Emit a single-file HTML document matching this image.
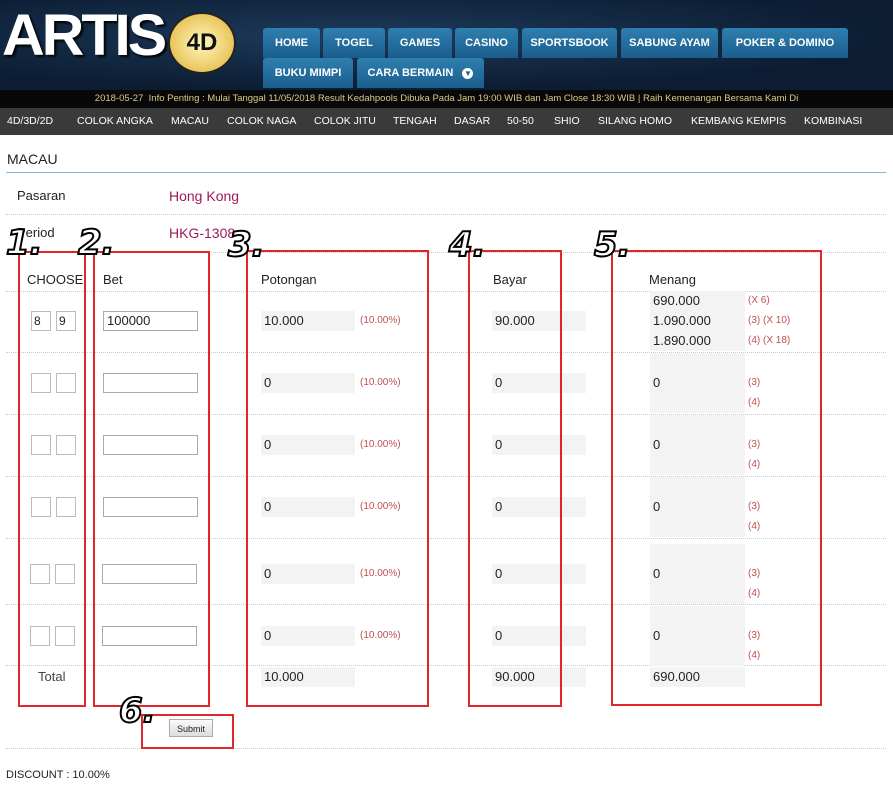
<!DOCTYPE html><html><head><meta charset="utf-8"><style>
body{margin:0;width:893px;height:797px;position:relative;background:#fff;font-family:"Liberation Sans",sans-serif;overflow:hidden;color:#222}
.a{position:absolute}
#hd{left:0;top:0;width:893px;height:90px;background:radial-gradient(ellipse at 40% 40%,#1d3a5a,#0c1d33 70%)}
.nb{position:absolute;height:30px;background:linear-gradient(#2e7fb0,#1a5d8c);color:#fff;font-size:11px;font-weight:bold;line-height:30px;text-align:center;border-radius:3px 3px 0 0}
#tk{left:0;top:90px;width:893px;height:18px;background:#080808;color:#d6c98a;font-size:9.5px;line-height:18px;text-align:center}
#sm{left:0;top:108px;width:893px;height:27px;background:#3a3a3a;color:#fff;font-size:10.5px;line-height:27px}
#sm span{position:absolute;top:0}
.dl{position:absolute;left:6px;width:880px;border-top:1px dotted #ccc}
.t{position:absolute;font-size:13px;line-height:20px}
.ib{position:absolute;border:1px solid #bbb;font-size:12px;line-height:18px;padding-left:2px;box-sizing:border-box;width:20px;height:20px}
.bi{position:absolute;width:95px;height:20px;border:1px solid #aaa;box-sizing:border-box;font-size:13px;line-height:18px;padding-left:3px}
.g{position:absolute;background:#f3f3f3;height:20px;font-size:13px;line-height:20px;padding-left:3px;box-sizing:border-box}
.p{position:absolute;font-size:10px;color:#c05050;line-height:20px}
.rb{position:absolute;border:2px solid #e0262b;box-sizing:border-box}
.n{position:absolute;font-size:34px;font-weight:bold;font-style:italic;color:#fff;-webkit-text-stroke:2px #000;font-family:"DejaVu Sans",sans-serif;line-height:34px}
</style></head><body>
<div id="hd" class="a"></div>
<div class="a" style="left:2px;top:2px;font-size:58px;font-weight:900;color:#fff;font-family:'Liberation Sans';letter-spacing:-3px;transform:scaleX(1.02);transform-origin:left;text-shadow:2px 2px 2px #000">ARTIS</div>
<div class="a" style="left:168px;top:12px;width:64px;height:58px;border-radius:50%;background:radial-gradient(#fff7c0,#e0b030);border:2px solid #222;font-size:24px;font-weight:bold;color:#111;text-align:center;line-height:58px">4D</div>
<div class="nb" style="left:263px;top:28px;width:57px">HOME</div>
<div class="nb" style="left:323px;top:28px;width:62px">TOGEL</div>
<div class="nb" style="left:388px;top:28px;width:64px">GAMES</div>
<div class="nb" style="left:455px;top:28px;width:63px">CASINO</div>
<div class="nb" style="left:522px;top:28px;width:95px">SPORTSBOOK</div>
<div class="nb" style="left:621px;top:28px;width:97px">SABUNG AYAM</div>
<div class="nb" style="left:722px;top:28px;width:126px">POKER &amp; DOMINO</div>
<div class="nb" style="left:263px;top:58px;width:90px">BUKU MIMPI</div>
<div class="nb" style="left:357px;top:58px;width:127px">CARA BERMAIN &nbsp; <span style="display:inline-block;width:11px;height:11px;border-radius:50%;background:#fff;color:#1a5d8c;font-size:8px;line-height:11px;vertical-align:middle">▼</span></div>
<div id="tk" class="a">2018-05-27 &nbsp;Info Penting : Mulai Tanggal 11/05/2018 Result Kedahpools Dibuka Pada Jam 19:00 WIB dan Jam Close 18:30 WIB | Raih Kemenangan Bersama Kami Di</div>
<div id="sm" class="a"><span style="left:7px">4D/3D/2D</span><span style="left:77px">COLOK ANGKA</span><span style="left:171px">MACAU</span><span style="left:227px">COLOK NAGA</span><span style="left:314px">COLOK JITU</span><span style="left:393px">TENGAH</span><span style="left:454px">DASAR</span><span style="left:507px">50-50</span><span style="left:554px">SHIO</span><span style="left:598px">SILANG HOMO</span><span style="left:691px">KEMBANG KEMPIS</span><span style="left:804px">KOMBINASI</span></div>
<div class="t" style="left:7px;top:149px;font-size:14px">MACAU</div>
<div class="a" style="left:6px;top:172px;width:880px;border-top:1px solid #7ab8d8"></div>
<div class="t" style="left:17px;top:186px">Pasaran</div><div class="t" style="left:169px;top:186px;color:#a0185e;font-size:14px">Hong Kong</div>
<div class="dl" style="top:214px"></div>
<div class="t" style="left:17px;top:223px">Period</div><div class="t" style="left:169px;top:223px;color:#a0185e;font-size:14px">HKG-1308</div>
<div class="dl" style="top:252px"></div>
<div class="t" style="left:27px;top:270px">CHOOSE</div><div class="t" style="left:103px;top:270px">Bet</div><div class="t" style="left:261px;top:270px">Potongan</div><div class="t" style="left:493px;top:270px">Bayar</div><div class="t" style="left:649px;top:270px">Menang</div>
<div class="dl" style="top:291px"></div><div class="dl" style="top:352px"></div><div class="dl" style="top:414px"></div><div class="dl" style="top:476px"></div><div class="dl" style="top:538px"></div><div class="dl" style="top:604px"></div><div class="dl" style="top:665px"></div><div class="dl" style="top:748px"></div>
<div class="ib" style="left:31px;top:311px">8</div><div class="ib" style="left:56px;top:311px">9</div><div class="bi" style="left:103px;top:311px">100000</div>
<div class="g" style="left:261px;top:311px;width:94px">10.000</div><div class="p" style="left:360px;top:311px">(10.00%)</div>
<div class="g" style="left:492px;top:311px;width:94px">90.000</div>
<div class="g" style="left:650px;top:291px;width:95px">690.000</div><div class="p" style="left:748px;top:291px">(X 6)</div>
<div class="g" style="left:650px;top:311px;width:95px">1.090.000</div><div class="p" style="left:748px;top:311px">(3) (X 10)</div>
<div class="g" style="left:650px;top:331px;width:95px">1.890.000</div><div class="p" style="left:748px;top:331px">(4) (X 18)</div>
<div class="ib" style="left:31px;top:373px"></div><div class="ib" style="left:56px;top:373px"></div><div class="bi" style="left:103px;top:373px"></div><div class="g" style="left:261px;top:373px;width:94px">0</div><div class="p" style="left:360px;top:373px">(10.00%)</div><div class="g" style="left:492px;top:373px;width:94px">0</div><div class="g" style="left:650px;top:353px;width:95px"></div><div class="g" style="left:650px;top:373px;width:95px">0</div><div class="g" style="left:650px;top:393px;width:95px"></div><div class="p" style="left:748px;top:373px">(3)</div><div class="p" style="left:748px;top:393px">(4)</div>
<div class="ib" style="left:31px;top:435px"></div><div class="ib" style="left:56px;top:435px"></div><div class="bi" style="left:103px;top:435px"></div><div class="g" style="left:261px;top:435px;width:94px">0</div><div class="p" style="left:360px;top:435px">(10.00%)</div><div class="g" style="left:492px;top:435px;width:94px">0</div><div class="g" style="left:650px;top:415px;width:95px"></div><div class="g" style="left:650px;top:435px;width:95px">0</div><div class="g" style="left:650px;top:455px;width:95px"></div><div class="p" style="left:748px;top:435px">(3)</div><div class="p" style="left:748px;top:455px">(4)</div>
<div class="ib" style="left:31px;top:497px"></div><div class="ib" style="left:56px;top:497px"></div><div class="bi" style="left:103px;top:497px"></div><div class="g" style="left:261px;top:497px;width:94px">0</div><div class="p" style="left:360px;top:497px">(10.00%)</div><div class="g" style="left:492px;top:497px;width:94px">0</div><div class="g" style="left:650px;top:477px;width:95px"></div><div class="g" style="left:650px;top:497px;width:95px">0</div><div class="g" style="left:650px;top:517px;width:95px"></div><div class="p" style="left:748px;top:497px">(3)</div><div class="p" style="left:748px;top:517px">(4)</div>
<div class="ib" style="left:30px;top:564px"></div><div class="ib" style="left:55px;top:564px"></div><div class="bi" style="left:102px;top:564px"></div><div class="g" style="left:261px;top:564px;width:94px">0</div><div class="p" style="left:360px;top:564px">(10.00%)</div><div class="g" style="left:492px;top:564px;width:94px">0</div><div class="g" style="left:650px;top:544px;width:95px"></div><div class="g" style="left:650px;top:564px;width:95px">0</div><div class="g" style="left:650px;top:584px;width:95px"></div><div class="p" style="left:748px;top:564px">(3)</div><div class="p" style="left:748px;top:584px">(4)</div>
<div class="ib" style="left:30px;top:626px"></div><div class="ib" style="left:55px;top:626px"></div><div class="bi" style="left:102px;top:626px"></div><div class="g" style="left:261px;top:626px;width:94px">0</div><div class="p" style="left:360px;top:626px">(10.00%)</div><div class="g" style="left:492px;top:626px;width:94px">0</div><div class="g" style="left:650px;top:606px;width:95px"></div><div class="g" style="left:650px;top:626px;width:95px">0</div><div class="g" style="left:650px;top:646px;width:95px"></div><div class="p" style="left:748px;top:626px">(3)</div><div class="p" style="left:748px;top:646px">(4)</div>
<div class="t" style="left:38px;top:667px;color:#444">Total</div>
<div class="g" style="left:261px;top:667px;width:94px">10.000</div><div class="g" style="left:492px;top:667px;width:94px">90.000</div><div class="g" style="left:650px;top:667px;width:95px">690.000</div>
<div class="a" style="left:169px;top:719px;width:44px;height:18px;border:1px solid #aaa;background:linear-gradient(#fafafa,#ddd);font-size:9px;line-height:18px;text-align:center;box-sizing:border-box">Submit</div>
<div class="t" style="left:6px;top:765px;font-size:11px">DISCOUNT : 10.00%</div>
<div class="rb" style="left:18px;top:251px;width:68px;height:456px"></div>
<div class="rb" style="left:93px;top:251px;width:117px;height:456px"></div>
<div class="rb" style="left:246px;top:250px;width:183px;height:457px"></div>
<div class="rb" style="left:468px;top:250px;width:94px;height:457px"></div>
<div class="rb" style="left:611px;top:250px;width:211px;height:456px"></div>
<div class="rb" style="left:141px;top:714px;width:93px;height:35px"></div>
<div class="n" style="left:6px;top:226px">1.</div>
<div class="n" style="left:78px;top:226px">2.</div>
<div class="n" style="left:228px;top:228px">3.</div>
<div class="n" style="left:449px;top:228px">4.</div>
<div class="n" style="left:594px;top:228px">5.</div>
<div class="n" style="left:119px;top:694px">6.</div>
</body></html>
